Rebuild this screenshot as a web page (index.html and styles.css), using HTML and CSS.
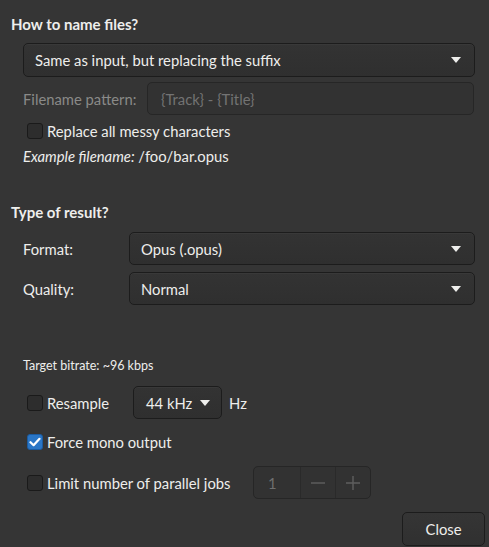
FILE: index.html
```html
<!DOCTYPE html>
<html>
<head>
<meta charset="utf-8">
<link rel="stylesheet" href="styles.css">
</head>
<body>
<div class="page">
  <div class="heading first">How to name files?</div>
  <div class="combo wide">
    <span class="combo-text">Same as input, but replacing the suffix</span>
    <svg class="arrow" width="10" height="6" viewBox="0 0 10 6"><path d="M0 0 H10 L5 6 Z" fill="#eeeeec"/></svg>
  </div>
  <div class="row pattern-row">
    <span class="label dim pattern-label">Filename pattern:</span>
    <div class="entry"><span class="placeholder">{Track} - {Title}</span></div>
  </div>
  <label class="check-row messy-row">
    <span class="check"></span>
    <span class="check-label">Replace all messy characters</span>
  </label>
  <div class="example"><em>Example filename:</em> /foo/bar.opus</div>

  <div class="heading second">Type of result?</div>
  <div class="row format-row">
    <span class="label field-label">Format:</span>
    <div class="combo grow">
      <span class="combo-text">Opus (.opus)</span>
      <svg class="arrow" width="10" height="6" viewBox="0 0 10 6"><path d="M0 0 H10 L5 6 Z" fill="#eeeeec"/></svg>
    </div>
  </div>
  <div class="row quality-row">
    <span class="label field-label">Quality:</span>
    <div class="combo grow">
      <span class="combo-text">Normal</span>
      <svg class="arrow" width="10" height="6" viewBox="0 0 10 6"><path d="M0 0 H10 L5 6 Z" fill="#eeeeec"/></svg>
    </div>
  </div>

  <div class="bitrate">Target bitrate: ~96 kbps</div>

  <div class="row resample-row">
    <label class="check-row inline resample-check">
      <span class="check"></span>
      <span class="check-label">Resample</span>
    </label>
    <div class="combo small">
      <span class="combo-text">44 kHz</span>
      <svg class="arrow" width="10" height="6" viewBox="0 0 10 6"><path d="M0 0 H10 L5 6 Z" fill="#eeeeec"/></svg>
    </div>
    <span class="unit">Hz</span>
  </div>

  <label class="check-row mono-row">
    <span class="check checked">
      <svg width="12" height="10" viewBox="0 0 12 10"><path d="M1.5 5.2 L4.6 8.2 L10.5 1.8" fill="none" stroke="#ffffff" stroke-width="2.2" stroke-linecap="round" stroke-linejoin="round"/></svg>
    </span>
    <span class="check-label">Force mono output</span>
  </label>

  <div class="row limit-row">
    <label class="check-row inline limit-check">
      <span class="check"></span>
      <span class="check-label">Limit number of parallel jobs</span>
    </label>
    <div class="spin">
      <span class="spin-value">1</span>
      <span class="spin-btn">
        <svg width="16" height="16" viewBox="0 0 16 16"><path d="M1 8 H15" stroke="#5f5f5f" stroke-width="1.4"/></svg>
      </span>
      <span class="spin-btn">
        <svg width="16" height="16" viewBox="0 0 16 16"><path d="M1 8 H15 M8 1 V15" stroke="#5f5f5f" stroke-width="1.4"/></svg>
      </span>
    </div>
  </div>

  <div class="footer">
    <button class="close-btn">Close</button>
  </div>
</div>
</body>
</html>
```

FILE: styles.css
```css
html, body {
  margin: 0;
  padding: 0;
}
body {
  width: 489px;
  height: 547px;
  overflow: hidden;
  background: #353535;
  color: #eeeeec;
  font-family: Lato, "Noto Sans", sans-serif;
  font-size: 14.8px;
}
.page {
  display: flex;
  flex-direction: column;
}
.heading {
  font-weight: bold;
  font-size: 15px;
  line-height: 18px;
  margin-left: 11px;
}
.heading.first { margin-top: 15px; }
.heading.second { margin-top: 38px; }

.combo {
  box-sizing: border-box;
  height: 34px;
  display: flex;
  align-items: center;
  justify-content: space-between;
  padding: 0 13px 0 11px;
  background: linear-gradient(to bottom, #333333, #2f2f2f);
  border: 1px solid #1c1c1c;
  border-radius: 5px;
  box-shadow: inset 0 1px rgba(255,255,255,0.03);
}
.combo.wide {
  margin: 10px 14px 0 23px;
}
.combo.grow {
  flex: 1;
  height: 33px;
}
.combo.small {
  width: 89px;
  height: 33px;
  padding: 0 11px 0 12px;
}
.combo-text { white-space: nowrap; }
.arrow { flex: none; }

.row {
  display: flex;
  align-items: center;
  margin-left: 23px;
}
.label { white-space: nowrap; }
.dim { color: #8a8a88; }
.pattern-row {
  margin-top: 5px;
  margin-right: 15px;
  height: 33px;
}
.pattern-label { width: 124px; flex: none; }
.entry {
  box-sizing: border-box;
  flex: 1;
  height: 33px;
  display: flex;
  align-items: center;
  padding-left: 13px;
  background: #323232;
  border: 1px solid #262626;
  border-radius: 5px;
}
.placeholder { color: #737373; }

.check-row {
  display: flex;
  align-items: center;
  height: 20px;
  margin-left: 27px;
}
.check-row.inline { margin-left: 4px; }
.check {
  box-sizing: border-box;
  width: 16px;
  height: 16px;
  flex: none;
  border: 1px solid #1a1a1a;
  border-radius: 3px;
  background: #2d2d2d;
  display: flex;
  align-items: center;
  justify-content: center;
}
.check.checked {
  background: #2a76c6;
  border-color: #1b5ba0;
}
.check-label {
  margin-left: 4px;
  white-space: nowrap;
}
.messy-row { margin-top: 6px; }

.example {
  margin: 6px 0 0 23px;
  line-height: 18px;
}
.example em { font-style: italic; }

.field-label { width: 106px; flex: none; }
.format-row { margin-top: 11px; margin-right: 14px; }
.quality-row { margin-top: 7px; margin-right: 14px; }

.bitrate {
  font-size: 12.5px;
  line-height: 14px;
  margin: 54px 0 0 23px;
}

.resample-row { margin-top: 13px; }
.resample-check { width: 106px; }
.unit { margin-left: 7px; }

.mono-row { margin-top: 13px; }

.limit-row { margin-top: 14px; }
.limit-check { width: 226px; }
.spin {
  box-sizing: border-box;
  display: flex;
  width: 118px;
  height: 33px;
  background: #323232;
  border: 1px solid #262626;
  border-radius: 5px;
  color: #6f6f6f;
}
.spin-value {
  flex: 1;
  display: flex;
  align-items: center;
  padding-left: 14px;
}
.spin-btn {
  width: 34px;
  flex: none;
  display: flex;
  align-items: center;
  justify-content: center;
  border-left: 1px solid #2a2a2a;
}

.footer {
  display: flex;
  justify-content: flex-end;
  margin: 13px 4px 0 0;
}
.close-btn {
  box-sizing: border-box;
  width: 83px;
  height: 34px;
  font: inherit;
  color: #eeeeec;
  background: linear-gradient(to bottom, #353535, #303030);
  border: 1px solid #1c1c1c;
  border-radius: 5px;
  padding: 0;
}
```
